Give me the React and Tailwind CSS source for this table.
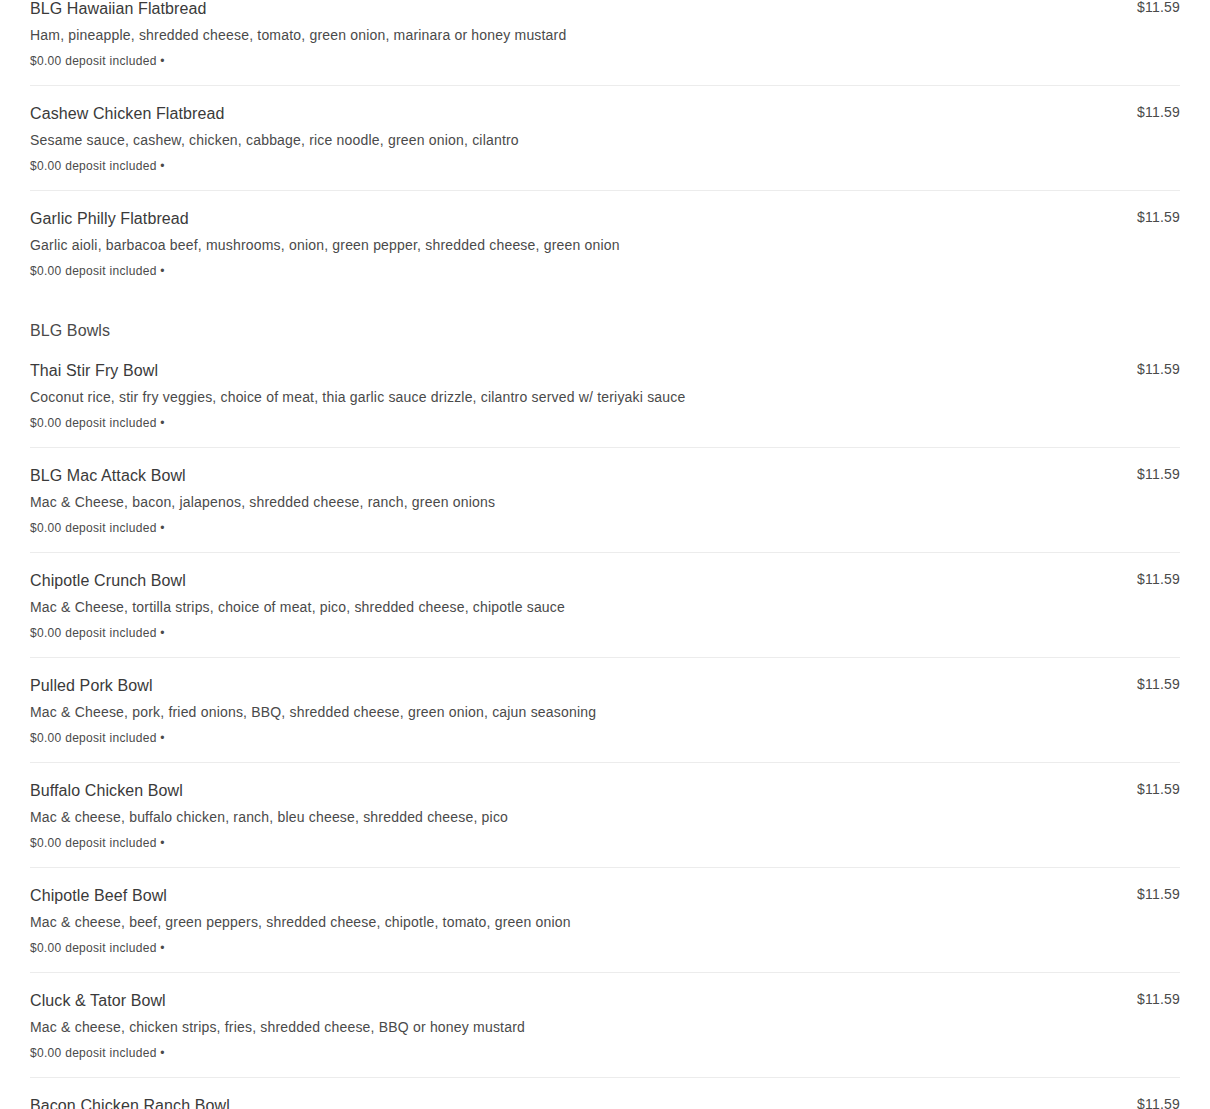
const flatbreads = [
  { name: "BLG Hawaiian Flatbread", desc: "Ham, pineapple, shredded cheese, tomato, green onion, marinara or honey mustard" },
  { name: "Cashew Chicken Flatbread", desc: "Sesame sauce, cashew, chicken, cabbage, rice noodle, green onion, cilantro" },
  { name: "Garlic Philly Flatbread", desc: "Garlic aioli, barbacoa beef, mushrooms, onion, green pepper, shredded cheese, green onion" },
];

const bowls = [
  { name: "Thai Stir Fry Bowl", desc: "Coconut rice, stir fry veggies, choice of meat, thia garlic sauce drizzle, cilantro served w/ teriyaki sauce" },
  { name: "BLG Mac Attack Bowl", desc: "Mac & Cheese, bacon, jalapenos, shredded cheese, ranch, green onions" },
  { name: "Chipotle Crunch Bowl", desc: "Mac & Cheese, tortilla strips, choice of meat, pico, shredded cheese, chipotle sauce" },
  { name: "Pulled Pork Bowl", desc: "Mac & Cheese, pork, fried onions, BBQ, shredded cheese, green onion, cajun seasoning" },
  { name: "Buffalo Chicken Bowl", desc: "Mac & cheese, buffalo chicken, ranch, bleu cheese, shredded cheese, pico" },
  { name: "Chipotle Beef Bowl", desc: "Mac & cheese, beef, green peppers, shredded cheese, chipotle, tomato, green onion" },
  { name: "Cluck & Tator Bowl", desc: "Mac & cheese, chicken strips, fries, shredded cheese, BBQ or honey mustard" },
  { name: "Bacon Chicken Ranch Bowl", desc: "Mac & cheese, chicken, bacon, ranch, shredded cheese, green onion" },
];

function MenuItem({ item, last }) {
  return (
    <div className={`flex justify-between pt-[19px] pb-[17px] ${last ? "" : "border-b border-[#ececec]"}`}>
      <div className="flex flex-col">
        <div className="text-[16px] leading-[18px] tracking-[0.1px] text-[#3a3a3a]">{item.name}</div>
        <div className="mt-[8px] text-[14px] leading-[18px] tracking-[0.19px] text-[#4a4a4a]">{item.desc}</div>
        <div className="mt-[10px] text-[12px] leading-[14px] tracking-[0.3px] text-[#4a4a4a]">$0.00 deposit included •</div>
      </div>
      <div className="text-[14px] leading-[14px] tracking-[0.2px] text-[#4a4a4a]">$11.59</div>
    </div>
  );
}

export default function App() {
  return (
    <div className="bg-white px-[30px] font-['Liberation_Sans',Arial,sans-serif] overflow-hidden h-[1109px]">
      <div className="-mt-[19px]">
        {flatbreads.map((item, i) => (
          <MenuItem key={item.name} item={item} last={i === flatbreads.length - 1} />
        ))}
        <div className="mt-[27px] mb-[3px] text-[16px] leading-[18px] tracking-[0.1px] text-[#4a4a4a]">BLG Bowls</div>
        {bowls.map((item, i) => (
          <MenuItem key={item.name} item={item} last={i === bowls.length - 1} />
        ))}
      </div>
    </div>
  );
}
